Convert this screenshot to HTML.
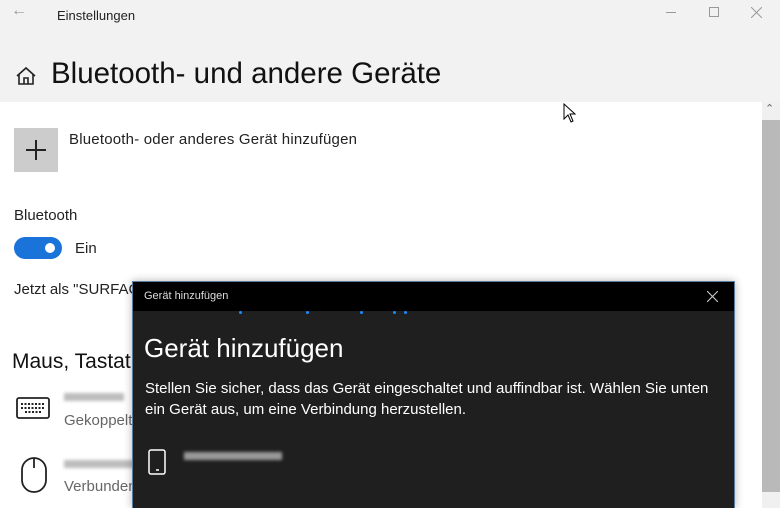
<!DOCTYPE html>
<html><head><meta charset="utf-8"><style>
*{margin:0;padding:0;box-sizing:border-box}
body{width:780px;height:508px;overflow:hidden;background:#fff;font-family:"Liberation Sans",sans-serif;position:relative;color:#000}
.a{position:absolute;white-space:nowrap}
.blur{position:absolute;background:#bdbdbd;filter:blur(1.5px);height:8px}
</style></head><body>
<div class="a" style="left:0;top:0;width:780px;height:102px;background:#f2f2f2"></div>
<div class="a" style="left:11px;top:2px;font-size:16px;color:#999">&#8592;</div>
<div class="a" style="left:57px;top:8px;font-size:13px;color:#222">Einstellungen</div>
<div class="a" style="left:666px;top:12px;width:10px;height:1px;background:#999"></div>
<div class="a" style="left:709px;top:7px;width:10px;height:10px;border:1px solid #999"></div>
<svg class="a" style="left:751px;top:7px" width="11" height="11"><path d="M0 0L11 11M11 0L0 11" stroke="#999" stroke-width="1"/></svg>
<svg class="a" style="left:15px;top:66px" width="22" height="20" viewBox="0 0 22 20"><path d="M2 10 L11 2 L20 10 M4 8 V18 H18 V8 M9 18 V12 H13 V18" fill="none" stroke="#222" stroke-width="1.6"/></svg>
<div class="a" style="left:51px;top:57px;font-size:29.5px;color:#111">Bluetooth- und andere Geräte</div>
<svg class="a" style="left:562px;top:103px" width="16" height="22"><path d="M2 1 L2 16 L6 12 L9 19 L11 18 L8 11 L13 11 Z" fill="#fff" stroke="#000" stroke-width="1"/></svg>
<div class="a" style="left:762px;top:102px;width:18px;height:406px;background:#f0f0f0"></div>
<div class="a" style="left:765px;top:102px;font-size:11px;color:#666">&#8963;</div>
<div class="a" style="left:762px;top:120px;width:18px;height:372px;background:#b9b9b9"></div>
<div class="a" style="left:14px;top:128px;width:44px;height:44px;background:#cccccc"></div>
<div class="a" style="left:26px;top:149px;width:20px;height:1.5px;background:#222"></div>
<div class="a" style="left:35px;top:140px;width:1.5px;height:20px;background:#222"></div>
<div class="a" style="left:69px;top:131px;font-size:15px;color:#222;letter-spacing:0.2px">Bluetooth- oder anderes Gerät hinzufügen</div>
<div class="a" style="left:14px;top:207px;font-size:15px;color:#222">Bluetooth</div>
<div class="a" style="left:14px;top:237px;width:48px;height:22px;border-radius:11px;background:#1a73d9"></div>
<div class="a" style="left:45px;top:243px;width:10px;height:10px;border-radius:5px;background:#fff"></div>
<div class="a" style="left:75px;top:240px;font-size:15px;color:#222">Ein</div>
<div class="a" style="left:14px;top:281px;font-size:15px;color:#222">Jetzt als "SURFAC</div>
<div class="a" style="left:12px;top:350px;font-size:21px;color:#111">Maus, Tastat</div>
<svg class="a" style="left:16px;top:397px" width="34" height="22"><rect x="1" y="1" width="32" height="20" rx="2" fill="none" stroke="#222" stroke-width="1.8"/><path d="M5 7h24M5 11h24M9 15h16" stroke="#222" stroke-width="2" stroke-dasharray="2 1.5"/></svg>
<div class="blur" style="left:64px;top:393px;width:60px"></div>
<div class="a" style="left:64px;top:412px;font-size:15px;color:#666">Gekoppelt</div>
<svg class="a" style="left:20px;top:456px" width="28" height="38"><rect x="2" y="2" width="24" height="34" rx="12" fill="none" stroke="#222" stroke-width="1.8"/><path d="M14 2v10" stroke="#222" stroke-width="1.8"/></svg>
<div class="blur" style="left:64px;top:460px;width:70px"></div>
<div class="a" style="left:64px;top:478px;font-size:15px;color:#666">Verbunden</div>
<div class="a" style="left:132px;top:281px;width:603px;height:227px;background:#1f1f1f;border:1px solid #5a7da0;border-bottom:none;box-shadow:0 0 8px rgba(0,0,0,.3)"></div>
<div class="a" style="left:133px;top:282px;width:601px;height:29px;background:#000"></div>
<div class="a" style="left:144px;top:290px;font-size:11px;color:#ddd">Gerät hinzufügen</div>
<svg class="a" style="left:707px;top:291px" width="11" height="11"><path d="M0 0L11 11M11 0L0 11" stroke="#ccc" stroke-width="1.1"/></svg>
<div class="a" style="left:239px;top:311px;width:3px;height:3px;background:#1a8cff;border-radius:2px"></div>
<div class="a" style="left:306px;top:311px;width:3px;height:3px;background:#1a8cff;border-radius:2px"></div>
<div class="a" style="left:360px;top:311px;width:3px;height:3px;background:#1a8cff;border-radius:2px"></div>
<div class="a" style="left:393px;top:311px;width:3px;height:3px;background:#1a8cff;border-radius:2px"></div>
<div class="a" style="left:404px;top:311px;width:3px;height:3px;background:#1a8cff;border-radius:2px"></div>
<div class="a" style="left:144px;top:333px;font-size:26px;color:#fff">Gerät hinzufügen</div>
<div class="a" style="left:145px;top:378px;font-size:15px;line-height:21px;color:#fff">Stellen Sie sicher, dass das Gerät eingeschaltet und auffindbar ist. Wählen Sie unten<br>ein Gerät aus, um eine Verbindung herzustellen.</div>
<svg class="a" style="left:148px;top:449px" width="20" height="27"><rect x="1" y="1" width="16" height="24" rx="2" fill="none" stroke="#fff" stroke-width="1.5"/><path d="M8 21h3" stroke="#fff" stroke-width="1.5"/></svg>
<div class="blur" style="left:184px;top:452px;width:98px;background:#9a9a9a"></div>
</body></html>
